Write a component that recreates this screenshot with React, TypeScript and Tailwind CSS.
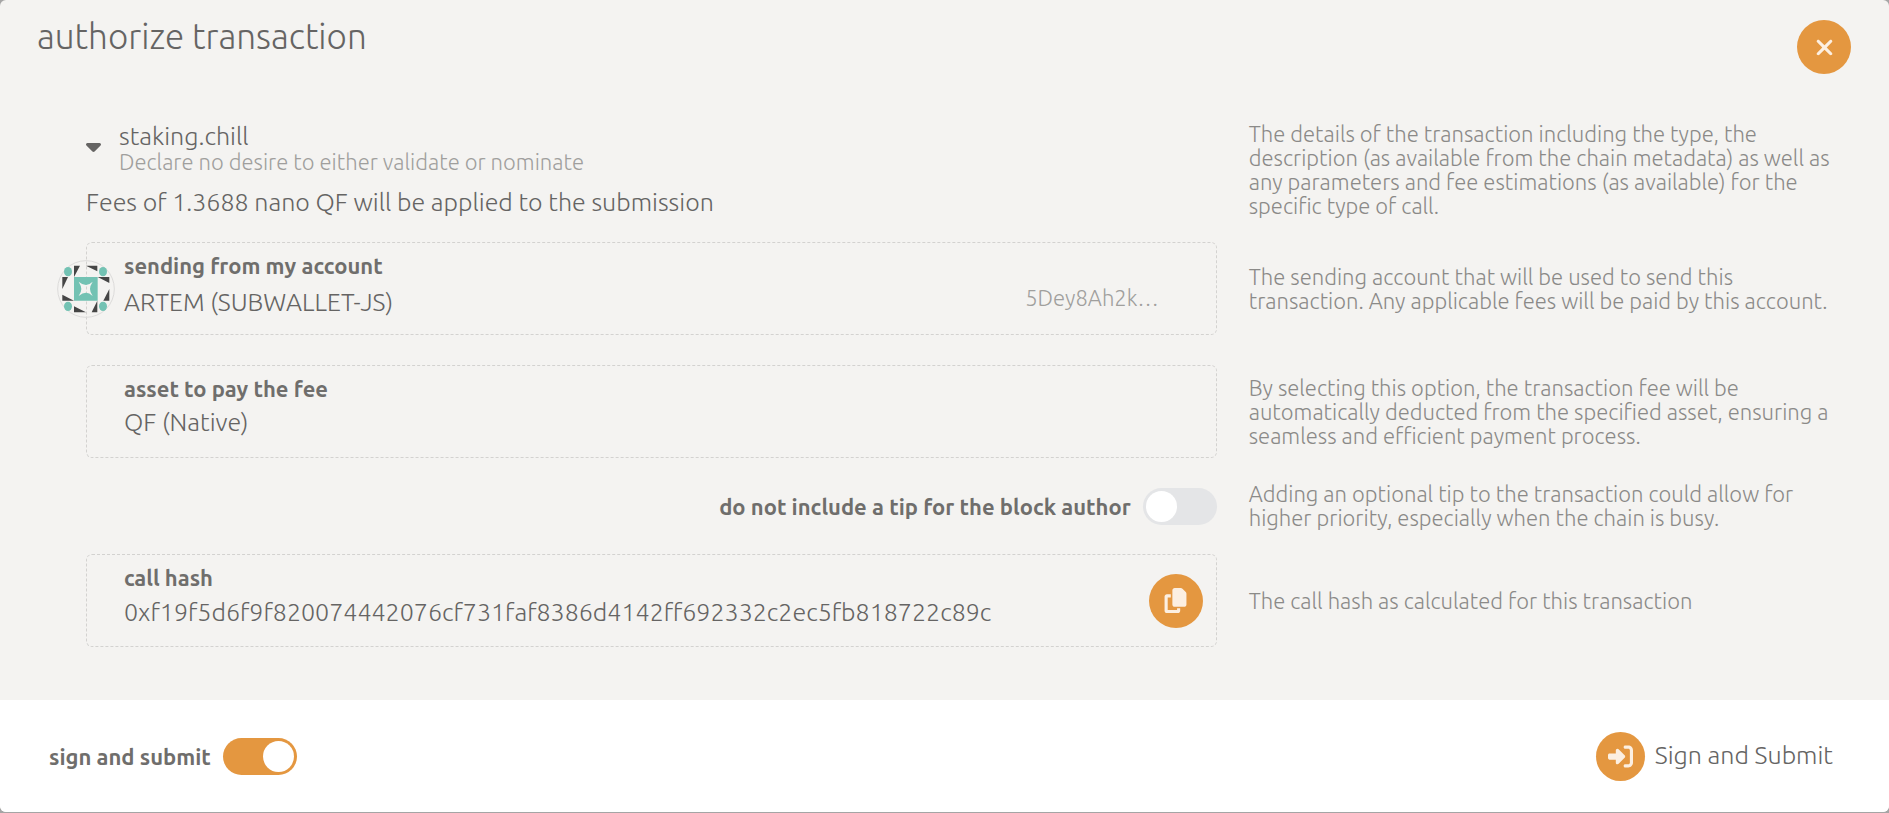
import { useState } from "react";
import type { ReactNode } from "react";
import { FaCaretDown, FaCopy, FaRightToBracket, FaXmark } from "react-icons/fa6";

function Identicon() {
  return (
    <svg viewBox="0 0 174 174" className="size-[58px]" role="img" aria-label="account icon">
      <circle cx="87" cy="87" r="85" fill="none" stroke="#dcdbda" strokeWidth="3" />
      <g fill="#73c2b3">
        <ellipse cx="33" cy="35" rx="12" ry="14" />
        <ellipse cx="138" cy="35" rx="12" ry="14" />
        <ellipse cx="33" cy="139" rx="12" ry="14" />
        <ellipse cx="138" cy="139" rx="12" ry="14" />
        <path
          fillRule="evenodd"
          d="M51 51H122V122H51ZM65 65Q73 78 73 87Q73 97 65 108Q77 98 87 98Q97 98 107 108Q99 97 99 87Q99 77 107 65Q96 75 87 75Q77 75 65 65Z"
        />
      </g>
      <g fill="#454545">
        <path d="M51 17H69L51 51Z" />
        <path d="M87 17H121V34Z" />
        <path d="M122 51H157V69Z" />
        <path d="M157 87V122H139Z" />
        <path d="M121 122V157H104Z" />
        <path d="M51 139V157H87Z" />
        <path d="M16 104V122H51Z" />
        <path d="M16 51H33L16 87Z" />
      </g>
    </svg>
  );
}

function Toggle({ label, checked, onChange }: { label: string; checked: boolean; onChange: (v: boolean) => void }) {
  return (
    <label className="flex cursor-pointer items-center gap-3 text-[22px] font-semibold text-[#6f6e6c]">
      <span>{label}</span>
      <input type="checkbox" className="peer sr-only" checked={checked} onChange={(e) => onChange(e.target.checked)} />
      <span className="flex h-[37px] w-[74px] rounded-full bg-[#e4e5e7] p-[3px] peer-checked:justify-end peer-checked:bg-[#e49740]">
        <span className="size-[31px] rounded-full bg-white" />
      </span>
    </label>
  );
}

function Row({ help, children }: { help: string; children: ReactNode }) {
  return (
    <div className="grid grid-cols-[minmax(0,21fr)_minmax(0,11fr)] items-center gap-8">
      <div>{children}</div>
      <p className="text-[22px] leading-6 text-[#8b8a88]">{help}</p>
    </div>
  );
}

const box = "flex h-[93px] items-center rounded-md border border-dashed border-[#d3d2d0] pl-[37px] pr-[13px]";
const field = "min-w-0 grow self-start pt-[9px]";
const labelText = "block text-[22px] leading-7 font-semibold text-[#6f6e6c]";

export default function App() {
  const [tip, setTip] = useState(false);
  const [submit, setSubmit] = useState(true);

  return (
    <div className="bg-[#a5a5a5] pb-px font-['Ubuntu','Open_Sans','Noto_Sans',sans-serif] font-light text-[#656463]">
      <main className="flex min-h-[calc(100vh-1px)] flex-col overflow-hidden rounded-md bg-[#f4f3f1]">
        <header className="flex items-start justify-between pt-5 pr-[38px] pl-[37px]">
          <h1 className="text-[35px] leading-8">authorize transaction</h1>
          <button aria-label="close" className="flex size-[54px] items-center justify-center rounded-full bg-[#e49740] text-[#fcefe1]">
            <FaXmark className="size-[25px]" />
          </button>
        </header>

        <section className="flex grow flex-col gap-6 pt-[47px] pr-12 pb-[52px] pl-[86px]">
          <Row help="The details of the transaction including the type, the description (as available from the chain metadata) as well as any parameters and fee estimations (as available) for the specific type of call.">
            <button className="flex items-start gap-[18px] pt-[3px] text-left">
              <FaCaretDown className="mt-2.5 h-6 w-[15px]" />
              <span>
                <span className="block text-[25px] leading-6">staking.chill</span>
                <span className="block text-[22px] leading-7 text-[#a09f9d]">Declare no desire to either validate or nominate</span>
              </span>
            </button>
            <p className="pt-2.5 text-[25px] leading-8">Fees of 1.3688 nano QF will be applied to the submission</p>
          </Row>

          <Row help="The sending account that will be used to send this transaction. Any applicable fees will be paid by this account.">
            <div className={`${box} relative`}>
              <div className="absolute top-[17px] -left-[30px]">
                <Identicon />
              </div>
              <div className={field}>
                <span className={labelText}>sending from my account</span>
                <div className="flex items-center justify-between pr-[44px] text-[25px] leading-11">
                  <span>ARTEM (SUBWALLET-JS)</span>
                  <span className="pb-2 text-[22px] leading-8 text-[#a09f9d]">5Dey8Ah2k…</span>
                </div>
              </div>
            </div>
          </Row>

          <div className="pt-1.5">
            <Row help="By selecting this option, the transaction fee will be automatically deducted from the specified asset, ensuring a seamless and efficient payment process.">
              <div className={box}>
                <div className={field}>
                  <label htmlFor="asset" className={labelText}>asset to pay the fee</label>
                  <select id="asset" className="block h-10 w-full appearance-none bg-transparent text-[25px]">
                    <option>QF (Native)</option>
                  </select>
                </div>
              </div>
            </Row>
          </div>

          <Row help="Adding an optional tip to the transaction could allow for higher priority, especially when the chain is busy.">
            <div className="flex justify-end">
              <Toggle label="do not include a tip for the block author" checked={tip} onChange={setTip} />
            </div>
          </Row>

          <Row help="The call hash as calculated for this transaction">
            <div className={box}>
              <div className={field}>
                <span className={labelText}>call hash</span>
                <output className="block text-[25px] leading-10">
                  0xf19f5d6f9f820074442076cf731faf8386d4142ff692332c2ec5fb818722c89c
                </output>
              </div>
              <button aria-label="copy call hash" className="flex size-[54px] shrink-0 items-center justify-center rounded-full bg-[#e49740] text-[#fcefe1]">
                <FaCopy className="size-[25px]" />
              </button>
            </div>
          </Row>
        </section>

        <footer className="flex h-28 items-center justify-between bg-white pr-14 pl-[49px]">
          <Toggle label="sign and submit" checked={submit} onChange={setSubmit} />
          <button className="flex items-center gap-2.5 text-[25px]">
            <span className="flex size-[49px] items-center justify-center rounded-full bg-[#e49740] text-[#fcefe1]">
              <FaRightToBracket className="size-[25px]" />
            </span>
            Sign and Submit
          </button>
        </footer>
      </main>
    </div>
  );
}
